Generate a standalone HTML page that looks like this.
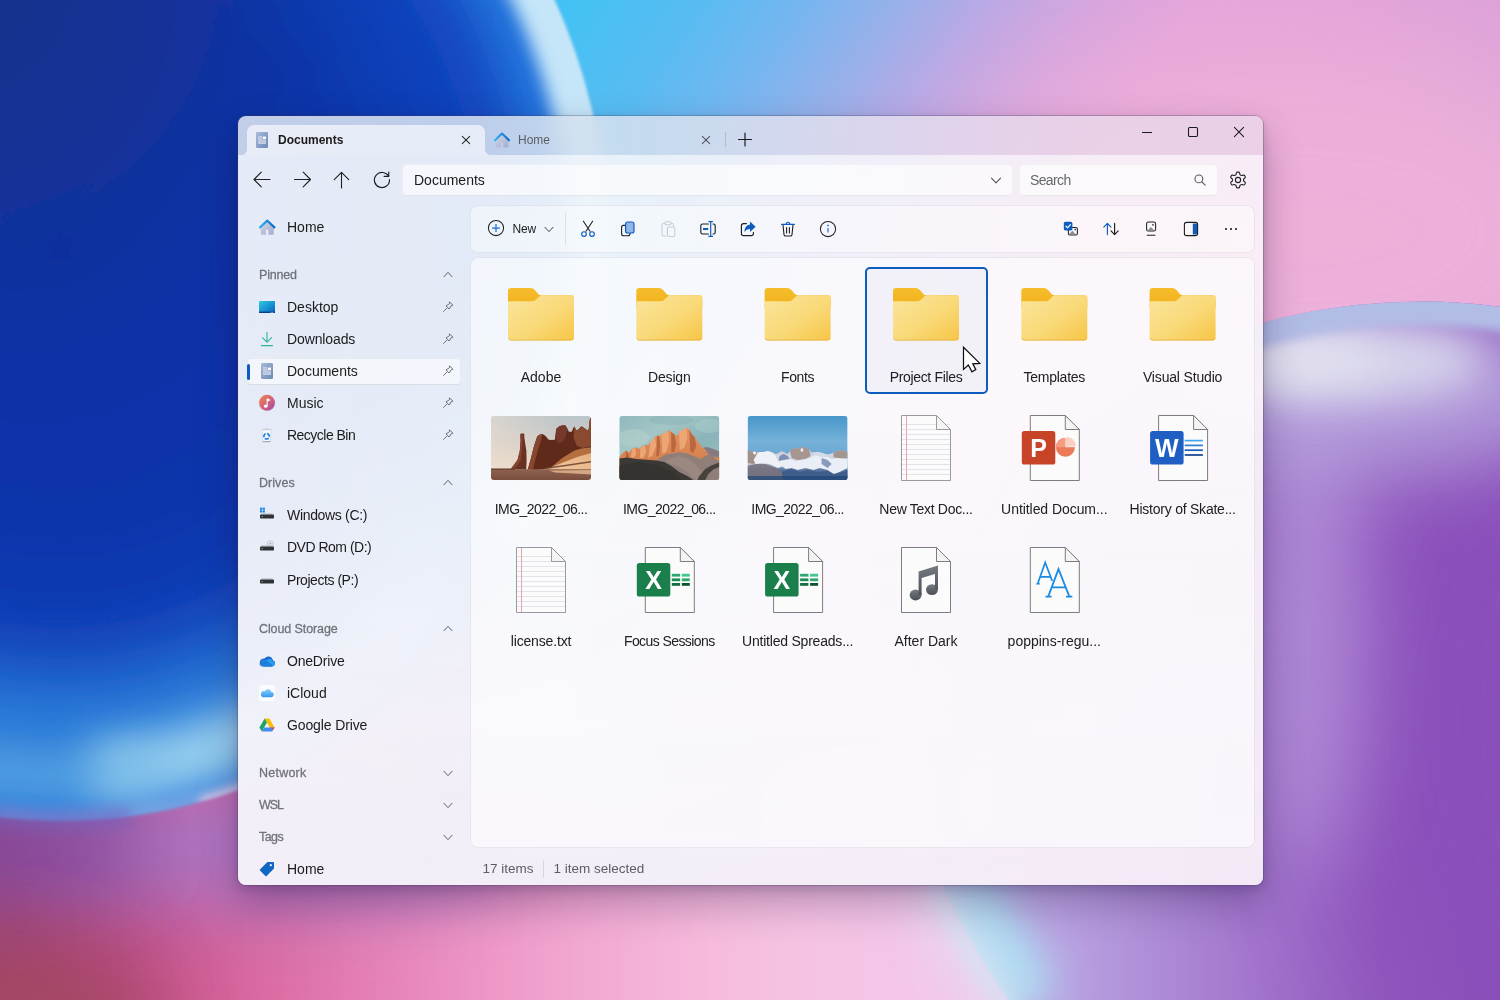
<!DOCTYPE html>
<html lang="en">
<head>
<meta charset="utf-8">
<title>Files</title>
<style>
*{box-sizing:border-box;margin:0;padding:0}
html,body{width:1500px;height:1000px;overflow:hidden;background:#c9a6dc;font-family:"Liberation Sans",sans-serif;color:#1b1b1b}
#wall{position:absolute;left:0;top:0;width:1500px;height:1000px;display:block}
#win{position:absolute;left:238px;top:116px;width:1025px;height:769px;border-radius:8px;overflow:hidden;background:linear-gradient(180deg,rgba(230,210,235,0) 40%,rgba(228,210,236,.6) 100%),linear-gradient(90deg,rgba(222,230,243,.87) 0%,rgba(212,224,238,.87) 38%,rgba(224,220,238,.87) 62%,rgba(232,214,233,.87) 82%,rgba(234,212,232,.87) 100%);-webkit-backdrop-filter:blur(10px);backdrop-filter:blur(10px);box-shadow:0 0 0 1px rgba(60,60,90,.28),0 18px 40px rgba(30,10,60,.30),0 4px 12px rgba(30,10,60,.18)}
#body{position:absolute;left:0;top:39px;width:1025px;height:730px;background:linear-gradient(155deg,rgba(250,252,255,.62) 0%,rgba(255,255,255,.62) 50%,rgba(255,250,254,.62) 100%)}

.abs{position:absolute}
.t{position:absolute;white-space:nowrap;line-height:20px;height:20px}
svg.i{position:absolute;overflow:visible}
#tab1{position:absolute;left:9px;top:9px;width:238px;height:30px;border-radius:7px 7px 0 0;background:rgba(255,255,255,.62)}
#tab1:before,#tab1:after{content:"";position:absolute;bottom:0;width:5px;height:5px}
#tab1:before{left:-5px;background:radial-gradient(circle at 0 0,rgba(255,255,255,0) 4.5px,rgba(255,255,255,.62) 5px)}
#tab1:after{right:-5px;background:radial-gradient(circle at 100% 0,rgba(255,255,255,0) 4.5px,rgba(255,255,255,.62) 5px)}
#addr{position:absolute;left:164px;top:48px;width:611px;height:32px;border-radius:5px;background:rgba(255,255,255,.62);border:1px solid rgba(0,0,0,.04);border-bottom-color:rgba(0,0,0,.075)}
#srch{position:absolute;left:781px;top:48px;width:199px;height:32px;border-radius:5px;background:rgba(255,255,255,.62);border:1px solid rgba(0,0,0,.04);border-bottom-color:rgba(0,0,0,.075)}
#tool{position:absolute;left:232px;top:89px;width:785px;height:48px;border-radius:8px;background:rgba(255,255,255,.42);border:1px solid rgba(20,30,80,.07)}
#pane{position:absolute;left:232px;top:141px;width:785px;height:591px;border-radius:8px;background:rgba(255,255,255,.55);border:1px solid rgba(20,30,80,.08)}
#selrow{position:absolute;left:9px;top:242px;width:214px;height:27px;border-radius:4px;background:rgba(255,255,255,.55);border:1px solid rgba(0,0,0,.05);border-bottom-color:rgba(0,0,0,.10)}
#selrow i{position:absolute;left:-1px;top:5px;width:3px;height:16px;border-radius:2px;background:#0f5cbe}
.sb{font-size:14px;color:#1b1b1b}
.hd{font-size:12.5px;color:#70737a;-webkit-text-stroke:.28px #70737a;letter-spacing:.05px}
.lb{position:absolute;width:128px;text-align:center;font-size:14px;line-height:20px;color:#202020;white-space:nowrap}
#sel{position:absolute;left:626.5px;top:150.5px;width:123px;height:127px;border:2.2px solid #0c5cbd;border-radius:5px;background:rgba(226,226,242,.36)}
</style>
</head>
<body>
<svg id="wall" viewBox="0 0 1500 1000">
<defs>
<filter id="b8" filterUnits="userSpaceOnUse" x="-300" y="-300" width="2100" height="1600"><feGaussianBlur stdDeviation="8"/></filter>
<filter id="b2" filterUnits="userSpaceOnUse" x="-300" y="-300" width="2100" height="1600"><feGaussianBlur stdDeviation="1.6"/></filter>
<filter id="b4" filterUnits="userSpaceOnUse" x="-300" y="-300" width="2100" height="1600"><feGaussianBlur stdDeviation="4"/></filter>
<filter id="b20" filterUnits="userSpaceOnUse" x="-300" y="-300" width="2100" height="1600"><feGaussianBlur stdDeviation="20"/></filter>
<filter id="b40" filterUnits="userSpaceOnUse" x="-300" y="-300" width="2100" height="1600"><feGaussianBlur stdDeviation="40"/></filter>
<filter id="b70" filterUnits="userSpaceOnUse" x="-300" y="-300" width="2100" height="1600"><feGaussianBlur stdDeviation="70"/></filter>
<linearGradient id="sky" x1="0" y1="0" x2="1075" y2="731" gradientUnits="userSpaceOnUse">
<stop offset="0" stop-color="#1a66d8"/>
<stop offset=".354" stop-color="#40c2f4"/>
<stop offset=".445" stop-color="#58bcf2"/>
<stop offset=".509" stop-color="#74b6f0"/>
<stop offset=".572" stop-color="#98b0ea"/>
<stop offset=".636" stop-color="#bca8e4"/>
<stop offset=".70" stop-color="#d4a4de"/>
<stop offset=".763" stop-color="#e2a2da"/>
<stop offset=".85" stop-color="#e0a0d8"/>
<stop offset="1" stop-color="#d8a0d8"/>
</linearGradient>
<linearGradient id="low" x1="0" y1="0" x2="1" y2="0">
<stop offset="0" stop-color="#8c4082"/>
<stop offset=".07" stop-color="#a0447c"/>
<stop offset=".13" stop-color="#bc4e86"/>
<stop offset=".20" stop-color="#d8669e"/>
<stop offset=".30" stop-color="#e888bc"/>
<stop offset=".40" stop-color="#f2a8d2"/>
<stop offset=".50" stop-color="#f7c0e0"/>
<stop offset=".62" stop-color="#f2c8ea"/>
<stop offset="1" stop-color="#f2c8ea"/>
</linearGradient>
<radialGradient id="bluep" cx="61" cy="247" r="574" gradientUnits="userSpaceOnUse" gradientTransform="translate(61 247) scale(.953 1) translate(-61 -247)">
<stop offset="0" stop-color="#0b2fa4"/>
<stop offset=".5" stop-color="#0c34ab"/>
<stop offset=".75" stop-color="#1042bc"/>
<stop offset=".9" stop-color="#1a5ccf"/>
<stop offset="1" stop-color="#2f80e2"/>
</radialGradient>
<linearGradient id="purp" x1="950" y1="0" x2="1500" y2="0" gradientUnits="userSpaceOnUse">
<stop offset="0" stop-color="#c4b8e8"/>
<stop offset=".22" stop-color="#b8a0e0"/>
<stop offset=".5" stop-color="#a67cd0"/>
<stop offset=".78" stop-color="#9259be"/>
<stop offset="1" stop-color="#8a50b8"/>
</linearGradient>
<radialGradient id="navy" cx="-40" cy="-30" r="470" gradientUnits="userSpaceOnUse">
<stop offset="0.000" stop-color="#1a2f8a" stop-opacity="0.900"/>
<stop offset="0.083" stop-color="#1a2f8a" stop-opacity="0.885"/>
<stop offset="0.167" stop-color="#1a2f8a" stop-opacity="0.840"/>
<stop offset="0.250" stop-color="#1a2f8a" stop-opacity="0.768"/>
<stop offset="0.333" stop-color="#1a2f8a" stop-opacity="0.675"/>
<stop offset="0.417" stop-color="#1a2f8a" stop-opacity="0.566"/>
<stop offset="0.500" stop-color="#1a2f8a" stop-opacity="0.450"/>
<stop offset="0.583" stop-color="#1a2f8a" stop-opacity="0.334"/>
<stop offset="0.667" stop-color="#1a2f8a" stop-opacity="0.225"/>
<stop offset="0.750" stop-color="#1a2f8a" stop-opacity="0.132"/>
<stop offset="0.833" stop-color="#1a2f8a" stop-opacity="0.060"/>
<stop offset="0.917" stop-color="#1a2f8a" stop-opacity="0.015"/>
<stop offset="1.000" stop-color="#1a2f8a" stop-opacity="0.000"/>
</radialGradient>
<clipPath id="cpBlue"><ellipse cx="61" cy="247" rx="547" ry="574"/></clipPath>
<clipPath id="cpPurp"><path id="ppath" d="M1015 1010 Q960 930 940 880 C900 740 960 540 1050 434 A546 498 0 0 1 1560 318 L1560 1010 Z"/></clipPath>
</defs>
<!-- upper sky -->
<rect width="1500" height="1000" fill="url(#sky)"/>
<!-- pink haze right-top -->
<ellipse cx="1300" cy="230" rx="330" ry="200" fill="#f0b2da" filter="url(#b70)" opacity=".9"/>
<!-- lower pink field -->
<g filter="url(#b40)">
<rect x="-100" y="700" width="1700" height="400" fill="url(#low)"/>
</g>
<ellipse cx="260" cy="845" rx="260" ry="58" fill="#a878c6" filter="url(#b40)" opacity=".95"/>
<ellipse cx="0" cy="850" rx="150" ry="52" fill="#82469a" filter="url(#b40)" opacity=".95"/>
<ellipse cx="-40" cy="1030" rx="200" ry="100" fill="#a4465e" filter="url(#b40)" opacity=".85"/>
<!-- right purple petal -->
<g clip-path="url(#cpPurp)">
<rect x="850" y="280" width="720" height="740" fill="url(#purp)"/>
<ellipse cx="1520" cy="720" rx="170" ry="330" fill="#8a4fbb" filter="url(#b70)" opacity=".9"/>
<ellipse cx="1305" cy="640" rx="60" ry="230" fill="#b594dc" filter="url(#b40)" opacity=".75"/>
<ellipse cx="1360" cy="390" rx="230" ry="85" fill="#b8a6df" filter="url(#b40)" opacity=".9"/>
<ellipse cx="1335" cy="362" rx="150" ry="40" fill="#d9d8ec" filter="url(#b20)" opacity=".95"/>
<ellipse cx="1300" cy="360" rx="80" ry="22" fill="#e4e4f0" filter="url(#b20)" opacity=".85"/>
<path d="M940 880 C900 740 960 540 1050 434 A546 498 0 0 1 1560 318" fill="none" stroke="#b2bde6" stroke-width="48" filter="url(#b4)"/>
<path d="M1025 1010 Q968 930 946 880" fill="none" stroke="#a9e2f3" stroke-width="84" filter="url(#b20)" opacity=".95"/>
</g>
<path d="M1000 1015 Q944 930 924 870" fill="none" stroke="#e6daf1" stroke-width="46" filter="url(#b20)" opacity=".75"/>
<path d="M1008 1010 Q952 930 933 875" fill="none" stroke="#cfe6f5" stroke-width="14" filter="url(#b8)" opacity=".8"/>
<!-- left blue petal -->
<g filter="url(#b2)"><g clip-path="url(#cpBlue)">
<ellipse cx="61" cy="247" rx="547" ry="574" fill="url(#bluep)"/>
<rect x="-20" y="-20" width="560" height="500" fill="url(#navy)"/>
<!-- broad lower glow following the arc -->
<ellipse cx="61" cy="247" rx="480" ry="507" fill="none" stroke="#3385dc" stroke-width="150" filter="url(#b40)" opacity=".9" pathLength="100" stroke-dasharray="34 66" stroke-dashoffset="-6"/>
<ellipse cx="61" cy="247" rx="500" ry="527" fill="none" stroke="#9dd3ef" stroke-width="58" filter="url(#b20)" opacity="1" pathLength="100" stroke-dasharray="14 86" stroke-dashoffset="-10"/>
<ellipse cx="61" cy="247" rx="502" ry="529" fill="none" stroke="#6db4e6" stroke-width="40" filter="url(#b20)" opacity=".7" pathLength="100" stroke-dasharray="12 88" stroke-dashoffset="-22"/>
<!-- right rim -->
<ellipse cx="61" cy="247" rx="547" ry="574" fill="none" stroke="#2f86e6" stroke-width="140" filter="url(#b20)" opacity=".62" pathLength="100" stroke-dasharray="34 66" stroke-dashoffset="22"/>
<ellipse cx="61" cy="247" rx="547" ry="574" fill="none" stroke="#cbe9f9" stroke-width="78" filter="url(#b8)" opacity=".97" pathLength="100" stroke-dasharray="30 70" stroke-dashoffset="21"/>
<!-- thin pink edge at bottom right -->
<ellipse cx="61" cy="247" rx="547" ry="574" fill="none" stroke="#f4d6ea" stroke-width="9" filter="url(#b4)" opacity=".85" pathLength="100" stroke-dasharray="9 91" stroke-dashoffset="-12"/>
<ellipse cx="61" cy="247" rx="547" ry="574" fill="none" stroke="#e8c4e4" stroke-width="8" filter="url(#b8)" opacity=".7" pathLength="100" stroke-dasharray="8 92" stroke-dashoffset="-19"/>
</g></g>
<ellipse cx="61" cy="247" rx="547" ry="574" fill="none" stroke="#6f62bd" stroke-width="16" filter="url(#b8)" opacity=".7" pathLength="100" stroke-dasharray="12 88" stroke-dashoffset="-23"/>
</svg>
<div id="win">
<div id="body"></div>
<div id="tab1"></div>
<svg class="i" style="left:18px;top:16px" width="13" height="17" viewBox="0 0 13 17"><defs><linearGradient id="g1" x1="0" y1="0" x2="1" y2="1"><stop offset="0" stop-color="#a9bbd9"/><stop offset="1" stop-color="#6a89b6"/></linearGradient></defs><rect x="0" y="0" width="12" height="16" rx="1.3" fill="url(#g1)"/><path d="M2 4H6.3V7.6H10V12H2Z" fill="#c3cee2"/><rect x="7" y="4.6" width="3" height="2.4" fill="#fff"/><path d="M2 5.5H6M2 7H6M2 8.6H10M2 10.2H10" stroke="#aebcd6" stroke-width=".45" fill="none"/></svg>
<div class="t tb" style="left:40px;top:13.5px;font-weight:bold;font-size:12px;color:#1b1b1b">Documents</div>
<svg class="i" style="left:223px;top:19px" width="10.4" height="10.4" viewBox="0 0 10.4 10.4"><g transform="translate(0.3 0.3)"><path d="M1 1L8.4 8.4M8.4 1L1 8.4" stroke="#2a2a2a" stroke-width="1.05" stroke-linecap="round" fill="none"/></g></svg>
<svg class="i" style="left:256px;top:16px" width="16" height="16" viewBox="0 0 16 16"><defs><linearGradient id="g2" x1="0" y1="0" x2="1" y2="0"><stop offset="0" stop-color="#2cb4f0"/><stop offset="1" stop-color="#0a68cc"/></linearGradient><linearGradient id="g3" x1="0" y1="0" x2="1" y2="1"><stop offset="0" stop-color="#d3d6e4"/><stop offset="1" stop-color="#a3acce"/></linearGradient></defs><path d="M1.6 8.4L8 2.6L14.4 8.4V14.2Q14.4 15.4 13.2 15.4H9.2V10.6H6.8V15.4H2.8Q1.6 15.4 1.6 14.2Z" fill="url(#g3)"/><path d="M1 8.2L8 1.6L15 8.2" stroke="url(#g2)" stroke-width="2.1" stroke-linecap="round" stroke-linejoin="round" fill="none"/></svg>
<div class="t tb" style="left:280px;top:13.5px;font-size:12px;color:#5c5e66">Home</div>
<svg class="i" style="left:463px;top:19px" width="10.4" height="10.4" viewBox="0 0 10.4 10.4"><g transform="translate(0.3 0.3)"><path d="M1 1L8.4 8.4M8.4 1L1 8.4" stroke="#55565c" stroke-width="1.05" stroke-linecap="round" fill="none"/></g></svg>
<div class="abs" style="left:487px;top:16px;width:1px;height:15px;background:rgba(0,0,0,.14)"></div>
<svg class="i" style="left:499px;top:16px" width="16.0" height="16.0" viewBox="0 0 16.0 16.0"><g transform="translate(0.5 0.0)"><path d="M7.5 1V14.0M1 7.5H14.0" stroke="#1b1b1b" stroke-width="1.2" stroke-linecap="round" fill="none"/></g></svg>
<svg class="i" style="left:903px;top:10px" width="12" height="12"><path d="M1 6.5H11" stroke="#1b1b1b" stroke-width="1.1" fill="none"/></svg>
<svg class="i" style="left:949px;top:10px" width="12" height="12"><rect x="1.5" y="1.5" width="9" height="9" rx="1.2" stroke="#1b1b1b" stroke-width="1.1" fill="none"/></svg>
<svg class="i" style="left:995px;top:10px" width="12.2" height="12.2" viewBox="0 0 12.2 12.2"><g transform="translate(0.4 0.4)"><path d="M1 1L10.2 10.2M10.2 1L1 10.2" stroke="#1b1b1b" stroke-width="1.05" stroke-linecap="round" fill="none"/></g></svg>
<svg class="i" style="left:14px;top:53px" width="21" height="21" viewBox="0 0 21 21"><g transform="translate(0 0.5)"><path d="M-8 0H8M-8 0L-0.7 -7.3M-8 0L-0.7 7.3" transform="translate(10 10)" stroke="#1f1f1f" stroke-width="1.1" stroke-linecap="round" stroke-linejoin="round" fill="none"/></g></svg>
<svg class="i" style="left:54px;top:53px" width="21" height="21" viewBox="0 0 21 21"><g transform="translate(0.5 0.5)"><path d="M-8 0H8M8 0L0.7 -7.3M8 0L0.7 7.3" transform="translate(10 10)" stroke="#1f1f1f" stroke-width="1.1" stroke-linecap="round" stroke-linejoin="round" fill="none"/></g></svg>
<svg class="i" style="left:93px;top:54px" width="21" height="21" viewBox="0 0 21 21"><g transform="translate(0.5 0.1)"><path d="M0 -7.8V7.9M0 -7.8L-7.3 -0.5M0 -7.8L7.3 -0.5" transform="translate(10 10)" stroke="#1f1f1f" stroke-width="1.1" stroke-linecap="round" stroke-linejoin="round" fill="none"/></g></svg>
<svg class="i" style="left:133px;top:54px" width="21" height="21" viewBox="0 0 21 21"><g transform="translate(0.95 0)"><path d="M6.7 -3.5A7.55 7.55 0 1 0 7.55 -0.4M6.8 -7.9V-3.6H2.2" transform="translate(10 10)" stroke="#1f1f1f" stroke-width="1.15" stroke-linecap="round" stroke-linejoin="round" fill="none"/></g></svg>
<div id="addr"></div>
<div class="t sb" style="left:176px;top:54px;font-size:14px">Documents</div>
<svg class="i" style="left:750px;top:56px" width="17" height="17" viewBox="0 0 17 17"><g transform="translate(0 0.5)"><path d="M-4.5 -2.475L0 2.475L4.5 -2.475" transform="translate(8 8)" stroke="#555" stroke-width="1.1" stroke-linecap="round" stroke-linejoin="round" fill="none"/></g></svg>
<div id="srch"></div>
<div class="t sb" style="left:792px;top:54px;letter-spacing:-0.63px;font-size:14px;color:#66686e">Search</div>
<svg class="i" style="left:954px;top:56px" width="17" height="17" viewBox="0 0 17 17"><circle cx="6.9" cy="6.9" r="3.9" stroke="#55575c" stroke-width="1.1" fill="none"/><path d="M9.8 9.8L13.2 13.2" stroke="#55575c" stroke-width="1.1" stroke-linecap="round"/></svg>
<svg class="i" style="left:990px;top:54px" width="21" height="21" viewBox="0 0 21 21"><path d="M10.00 2.10L10.52 2.12L11.03 2.17L11.48 2.56L11.75 3.48L11.90 4.40L12.14 4.83L12.48 4.98L12.80 5.15L13.11 5.34L13.41 5.56L13.90 5.55L14.77 5.23L15.70 5.00L16.27 5.19L16.57 5.61L16.84 6.05L17.09 6.51L17.30 6.98L17.18 7.56L16.52 8.25L15.80 8.85L15.55 9.27L15.59 9.63L15.60 10.00L15.59 10.37L15.55 10.73L15.80 11.15L16.52 11.75L17.18 12.44L17.30 13.02L17.09 13.49L16.84 13.95L16.57 14.39L16.27 14.81L15.70 15.00L14.77 14.77L13.90 14.45L13.41 14.44L13.11 14.66L12.80 14.85L12.48 15.02L12.14 15.17L11.90 15.60L11.75 16.52L11.48 17.44L11.03 17.83L10.52 17.88L10.00 17.90L9.48 17.88L8.97 17.83L8.52 17.44L8.25 16.52L8.10 15.60L7.86 15.17L7.52 15.02L7.20 14.85L6.89 14.66L6.59 14.44L6.10 14.45L5.23 14.77L4.30 15.00L3.73 14.81L3.43 14.39L3.16 13.95L2.91 13.49L2.70 13.02L2.82 12.44L3.48 11.75L4.20 11.15L4.45 10.73L4.41 10.37L4.40 10.00L4.41 9.63L4.45 9.27L4.20 8.85L3.48 8.25L2.82 7.56L2.70 6.98L2.91 6.51L3.16 6.05L3.43 5.61L3.73 5.19L4.30 5.00L5.23 5.23L6.10 5.55L6.59 5.56L6.89 5.34L7.20 5.15L7.52 4.98L7.86 4.83L8.10 4.40L8.25 3.48L8.52 2.56L8.97 2.17L9.48 2.12Z" stroke="#1f1f1f" stroke-width="1.1" stroke-linejoin="round" fill="none"/><circle cx="10" cy="10" r="2.6" stroke="#1f1f1f" stroke-width="1.1" fill="none"/></svg>
<div id="selrow"><i></i></div>
<svg class="i" style="left:20.7px;top:102.7px" width="16.4" height="16.4" viewBox="0 0 16 16"><defs><linearGradient id="g4" x1="0" y1="0" x2="1" y2="0"><stop offset="0" stop-color="#2cb4f0"/><stop offset="1" stop-color="#0a68cc"/></linearGradient><linearGradient id="g5" x1="0" y1="0" x2="1" y2="1"><stop offset="0" stop-color="#d3d6e4"/><stop offset="1" stop-color="#a3acce"/></linearGradient></defs><path d="M1.6 8.4L8 2.6L14.4 8.4V14.2Q14.4 15.4 13.2 15.4H9.2V10.6H6.8V15.4H2.8Q1.6 15.4 1.6 14.2Z" fill="url(#g5)"/><path d="M1 8.2L8 1.6L15 8.2" stroke="url(#g4)" stroke-width="2.1" stroke-linecap="round" stroke-linejoin="round" fill="none"/></svg>
<div class="t sb" style="left:49px;top:101px;">Home</div>
<div class="t hd" style="left:21px;top:149px;letter-spacing:-0.17px;">Pinned</div>
<svg class="i" style="left:202px;top:150px" width="17" height="17" viewBox="0 0 17 17"><g transform="translate(0 0.5)"><path d="M-4 2.2L0 -2.2L4 2.2" transform="translate(8 8)" stroke="#5f6168" stroke-width="1.0" stroke-linecap="round" stroke-linejoin="round" fill="none"/></g></svg>
<svg class="i" style="left:21px;top:184px" width="17" height="15" viewBox="0 0 17 15"><defs><linearGradient id="g6" x1="0" y1="0" x2="1" y2="1"><stop offset="0" stop-color="#33c8dc"/><stop offset=".5" stop-color="#1897d4"/><stop offset="1" stop-color="#0a5cba"/></linearGradient></defs><rect x="0" y="1" width="16" height="12" rx=".8" fill="url(#g6)"/><rect x="0" y="11.6" width="16" height="1.4" fill="#0a3f8a"/><rect x="11.5" y="11.9" width="1" height=".8" fill="#cfe6ff"/><rect x="13.2" y="11.9" width="1" height=".8" fill="#cfe6ff"/></svg>
<div class="t sb" style="left:49px;top:181px;">Desktop</div>
<svg class="i" style="left:202px;top:183px" width="17" height="17" viewBox="0 0 17 17"><path d="M1.8 -4.9L4.9 -1.8L3 -1.1L1.1 2L-2 -1.1L1.1 -3ZM-0.5 0.5L-4.4 4.4" transform="translate(8 8)" stroke="#6a6c74" stroke-width=".95" stroke-linecap="round" stroke-linejoin="round" fill="none"/></svg>
<svg class="i" style="left:21px;top:215px" width="17" height="17" viewBox="0 0 17 17"><path d="M8 1.2V11M3.4 6.6L8 11.2L12.6 6.6" stroke="#2db59c" stroke-width="1.1" stroke-linecap="round" stroke-linejoin="round" fill="none"/><path d="M2.4 14.6H13.6" stroke="#2db59c" stroke-width="1.1" stroke-linecap="round"/></svg>
<div class="t sb" style="left:49px;top:213px;letter-spacing:-0.12px;">Downloads</div>
<svg class="i" style="left:202px;top:215px" width="17" height="17" viewBox="0 0 17 17"><path d="M1.8 -4.9L4.9 -1.8L3 -1.1L1.1 2L-2 -1.1L1.1 -3ZM-0.5 0.5L-4.4 4.4" transform="translate(8 8)" stroke="#6a6c74" stroke-width=".95" stroke-linecap="round" stroke-linejoin="round" fill="none"/></svg>
<svg class="i" style="left:23px;top:247px" width="13" height="17" viewBox="0 0 13 17"><defs><linearGradient id="g7" x1="0" y1="0" x2="1" y2="1"><stop offset="0" stop-color="#a9bbd9"/><stop offset="1" stop-color="#6a89b6"/></linearGradient></defs><rect x="0" y="0" width="12" height="16" rx="1.3" fill="url(#g7)"/><path d="M2 4H6.3V7.6H10V12H2Z" fill="#c3cee2"/><rect x="7" y="4.6" width="3" height="2.4" fill="#fff"/><path d="M2 5.5H6M2 7H6M2 8.6H10M2 10.2H10" stroke="#aebcd6" stroke-width=".45" fill="none"/></svg>
<div class="t sb" style="left:49px;top:245px;">Documents</div>
<svg class="i" style="left:202px;top:247px" width="17" height="17" viewBox="0 0 17 17"><path d="M1.8 -4.9L4.9 -1.8L3 -1.1L1.1 2L-2 -1.1L1.1 -3ZM-0.5 0.5L-4.4 4.4" transform="translate(8 8)" stroke="#6a6c74" stroke-width=".95" stroke-linecap="round" stroke-linejoin="round" fill="none"/></svg>
<svg class="i" style="left:21px;top:278px" width="17" height="17" viewBox="0 0 17 17"><g transform="translate(0 0.8)"><defs><linearGradient id="g8" x1="0" y1="0" x2="1" y2="1"><stop offset="0" stop-color="#ee8a48"/><stop offset=".55" stop-color="#d0607c"/><stop offset="1" stop-color="#9a4cb4"/></linearGradient></defs><circle cx="8" cy="8" r="8" fill="url(#g8)"/><ellipse cx="6.7" cy="11.4" rx="1.8" ry="1.6" fill="#fff"/><path d="M8.1 11.4V3.8" stroke="#fff" stroke-width="1" fill="none"/><path d="M8.1 3.4L11.8 5.2L8.1 7Z" fill="#fff"/></g></svg>
<div class="t sb" style="left:49px;top:277px;">Music</div>
<svg class="i" style="left:202px;top:279px" width="17" height="17" viewBox="0 0 17 17"><path d="M1.8 -4.9L4.9 -1.8L3 -1.1L1.1 2L-2 -1.1L1.1 -3ZM-0.5 0.5L-4.4 4.4" transform="translate(8 8)" stroke="#6a6c74" stroke-width=".95" stroke-linecap="round" stroke-linejoin="round" fill="none"/></svg>
<svg class="i" style="left:23px;top:312px" width="11" height="16" viewBox="0 0 11 16"><g transform="translate(0.6 0)"><path d="M.4 1.6H9.6L8.8 13.6H1.2Z" fill="#f3f5f9" stroke="#cdd1da" stroke-width=".6"/><path d="M1.2 13.7H8.8" stroke="#9a9ca6" stroke-width="1"/><path d="M.6 1.4H9.4" stroke="#c2c6d0" stroke-width=".8"/><path d="M3.4 .5H6.6" stroke="#c8ccd4" stroke-width=".7"/><path d="M5.47 5.64A2.7 2.7 0 0 1 7.66 8.77M7.07 10.04A2.7 2.7 0 0 1 3.26 10.37M2.46 9.22A2.7 2.7 0 0 1 4.08 5.76" fill="none" stroke="#1a80e8" stroke-width="1.7"/></g></svg>
<div class="t sb" style="left:49px;top:309px;letter-spacing:-0.52px;">Recycle Bin</div>
<svg class="i" style="left:202px;top:311px" width="17" height="17" viewBox="0 0 17 17"><path d="M1.8 -4.9L4.9 -1.8L3 -1.1L1.1 2L-2 -1.1L1.1 -3ZM-0.5 0.5L-4.4 4.4" transform="translate(8 8)" stroke="#6a6c74" stroke-width=".95" stroke-linecap="round" stroke-linejoin="round" fill="none"/></svg>
<div class="t hd" style="left:21px;top:357px;">Drives</div>
<svg class="i" style="left:202px;top:358px" width="17" height="17" viewBox="0 0 17 17"><g transform="translate(0 0.5)"><path d="M-4 2.2L0 -2.2L4 2.2" transform="translate(8 8)" stroke="#5f6168" stroke-width="1.0" stroke-linecap="round" stroke-linejoin="round" fill="none"/></g></svg>
<svg class="i" style="left:21px;top:390px" width="17" height="17" viewBox="0 0 17 17"><path d="M2 8.6L3 7H13L14 8.6Z" fill="#c9ccd4"/><rect x="1" y="8.6" width="14" height="4" rx=".8" fill="#2f3136"/><rect x="2.6" y="10.2" width="1.3" height="1" fill="#4fd26a"/><rect x="1" y="1.6" width="2.2" height="2.2" fill="#1a84e6"/><rect x="3.7" y="1.6" width="2.2" height="2.2" fill="#1a84e6"/><rect x="1" y="4.3" width="2.2" height="2.2" fill="#1a84e6"/><rect x="3.7" y="4.3" width="2.2" height="2.2" fill="#1a84e6"/></svg>
<div class="t sb" style="left:49px;top:389px;letter-spacing:-0.32px;">Windows (C:)</div>
<svg class="i" style="left:21px;top:422px" width="17" height="17" viewBox="0 0 17 17"><ellipse cx="11.4" cy="5.6" rx="3.2" ry="2.8" fill="#dfe2e8" stroke="#b6bac4" stroke-width=".6"/><circle cx="11.4" cy="5.6" r=".8" fill="#9da2ae"/><path d="M2 8.6L3 7H13L14 8.6Z" fill="#c9ccd4"/><rect x="1" y="8.6" width="14" height="4" rx=".8" fill="#2f3136"/><rect x="2.6" y="10.2" width="1.3" height="1" fill="#4fd26a"/></svg>
<div class="t sb" style="left:49px;top:421px;letter-spacing:-0.5px;">DVD Rom (D:)</div>
<svg class="i" style="left:21px;top:455px" width="17" height="17" viewBox="0 0 17 17"><path d="M2 8.6L3 7H13L14 8.6Z" fill="#c9ccd4"/><rect x="1" y="8.6" width="14" height="4" rx=".8" fill="#2f3136"/><rect x="2.6" y="10.2" width="1.3" height="1" fill="#4fd26a"/></svg>
<div class="t sb" style="left:49px;top:454px;letter-spacing:-0.45px;">Projects (P:)</div>
<div class="t hd" style="left:21px;top:503px;letter-spacing:-0.1px;">Cloud Storage</div>
<svg class="i" style="left:202px;top:504px" width="17" height="17" viewBox="0 0 17 17"><g transform="translate(0 0.5)"><path d="M-4 2.2L0 -2.2L4 2.2" transform="translate(8 8)" stroke="#5f6168" stroke-width="1.0" stroke-linecap="round" stroke-linejoin="round" fill="none"/></g></svg>
<svg class="i" style="left:21px;top:537px" width="17" height="17" viewBox="0 0 17 17"><path d="M5.2 13.4H13A3.2 3.2 0 0 0 14 7.2A4.6 4.6 0 0 0 5.6 5.6A3.9 3.9 0 0 0 1.4 11.4Z" fill="#1668c8"/><path d="M3.2 13.4H13.2A2.8 2.8 0 0 0 13.8 7.9A3.8 3.8 0 0 0 7.2 7.6A3.5 3.5 0 0 0 3.2 13.4Z" fill="#2a9cf0"/><path d="M.4 11A2.6 2.6 0 0 1 3.8 8.4A3.8 3.8 0 0 1 7.4 7.4L13.8 12.6Q13.4 13.4 12.6 13.4H3A2.5 2.5 0 0 1 .4 11Z" fill="#1460be" opacity=".5"/></svg>
<div class="t sb" style="left:49px;top:535px;letter-spacing:-0.2px;">OneDrive</div>
<svg class="i" style="left:21px;top:569px" width="17" height="17" viewBox="0 0 17 17"><defs><linearGradient id="g9" x1="0" y1="0" x2="0" y2="1"><stop offset="0" stop-color="#86d0fa"/><stop offset="1" stop-color="#3798f0"/></linearGradient></defs><rect x="0" y="0" width="16" height="16" rx="3.4" fill="#fbfcff"/><path d="M4.2 12.2H12A2.6 2.6 0 0 0 12.4 7A3.5 3.5 0 0 0 5.8 6.2A3.1 3.1 0 0 0 4.2 12.2Z" fill="url(#g9)"/></svg>
<div class="t sb" style="left:49px;top:567px;">iCloud</div>
<svg class="i" style="left:21px;top:601px" width="17" height="17" viewBox="0 0 17 17"><path d="M5.6 1.4H10.4L15.6 10.4H10.8Z" fill="#fbbc04"/><path d="M5.6 1.4L8 5.6L2.8 14.6L.4 10.4Z" fill="#1fa463"/><path d="M5.2 10.4H15.6L13.2 14.6H2.8Z" fill="#4688f4"/><path d="M10.8 10.4H15.6L14.4 12.5Z" fill="#e94235" opacity=".95"/></svg>
<div class="t sb" style="left:49px;top:599px;letter-spacing:-0.12px;">Google Drive</div>
<div class="t hd" style="left:21px;top:647px;letter-spacing:0.23px;">Network</div>
<svg class="i" style="left:202px;top:649px" width="17" height="17" viewBox="0 0 17 17"><g transform="translate(0 0.5)"><path d="M-4 -2.2L0 2.2L4 -2.2" transform="translate(8 8)" stroke="#5f6168" stroke-width="1.0" stroke-linecap="round" stroke-linejoin="round" fill="none"/></g></svg>
<div class="t hd" style="left:21px;top:679px;letter-spacing:-1.1px;">WSL</div>
<svg class="i" style="left:202px;top:681px" width="17" height="17" viewBox="0 0 17 17"><g transform="translate(0 0.5)"><path d="M-4 -2.2L0 2.2L4 -2.2" transform="translate(8 8)" stroke="#5f6168" stroke-width="1.0" stroke-linecap="round" stroke-linejoin="round" fill="none"/></g></svg>
<div class="t hd" style="left:21px;top:711px;letter-spacing:-0.55px;">Tags</div>
<svg class="i" style="left:202px;top:713px" width="17" height="17" viewBox="0 0 17 17"><g transform="translate(0 0.5)"><path d="M-4 -2.2L0 2.2L4 -2.2" transform="translate(8 8)" stroke="#5f6168" stroke-width="1.0" stroke-linecap="round" stroke-linejoin="round" fill="none"/></g></svg>
<svg class="i" style="left:21px;top:745px" width="17" height="17" viewBox="0 0 17 17"><path d="M8.4 1H14.2Q15 1 15 1.8V7.6L7.6 15Q7 15.6 6.4 15L1 9.6Q.4 9 1 8.4Z" fill="#1266c4"/><circle cx="11.8" cy="4.2" r="1.15" fill="#eaf2ff"/></svg>
<div class="t sb" style="left:49px;top:743px;">Home</div>
<div id="tool"></div>
<svg class="i" style="left:248px;top:102px" width="21" height="21" viewBox="0 0 21 21"><circle cx="10" cy="10" r="7.6" stroke="#1f1f1f" stroke-width="1.05" fill="none"/><path d="M10 6V14M6 10H14" stroke="#1a6fd0" stroke-width="1.25" stroke-linecap="butt"/></svg>
<div class="t tb" style="left:274.5px;top:102.5px;font-size:12px;color:#1b1b1b;letter-spacing:-.2px">New</div>
<svg class="i" style="left:303px;top:105px" width="17" height="17" viewBox="0 0 17 17"><g transform="translate(0 0.5)"><path d="M-4 -2.2L0 2.2L4 -2.2" transform="translate(8 8)" stroke="#444" stroke-width="1.0" stroke-linecap="round" stroke-linejoin="round" fill="none"/></g></svg>
<div class="abs" style="left:327px;top:97px;width:1px;height:32px;background:rgba(0,0,0,.09)"></div>
<svg class="i" style="left:340px;top:103px" width="21" height="21" viewBox="0 0 21 21"><path d="M5.4 2.2L12 12.2M14.6 2.2L8 12.2" stroke="#1f1f1f" stroke-width="1.1" stroke-linecap="round" fill="none"/><circle cx="6" cy="15" r="2.3" stroke="#0f5cbe" stroke-width="1.15" fill="none"/><circle cx="14" cy="15" r="2.3" stroke="#0f5cbe" stroke-width="1.15" fill="none"/></svg>
<svg class="i" style="left:380px;top:103px" width="21" height="21" viewBox="0 0 21 21"><path d="M6.8 6.4H5.6Q3.6 6.4 3.6 8.4V14.8Q3.6 16.8 5.6 16.8H10Q12 16.8 12 14.8V14.4" stroke="#1f1f1f" stroke-width="1.1" stroke-linecap="round" fill="none"/><rect x="7.6" y="3" width="8.4" height="11" rx="2" fill="#8fb6e6" stroke="#0f5cbe" stroke-width="1.15"/></svg>
<svg class="i" style="left:420px;top:103px" width="21" height="21" viewBox="0 0 21 21"><path d="M7 4.4H5.4Q4 4.4 4 5.8V15.6Q4 17 5.4 17H8.6" stroke="#c9ccd2" stroke-width="1.05" fill="none"/><path d="M13 4.4H14.2Q15.6 4.4 15.6 5.8V7" stroke="#c9ccd2" stroke-width="1.05" fill="none"/><rect x="7" y="2.8" width="6" height="3" rx="1.2" stroke="#c9ccd2" stroke-width="1.05" fill="none"/><rect x="9.4" y="8" width="7.4" height="9.4" rx="1.4" stroke="#c9ccd2" stroke-width="1.05" fill="none"/></svg>
<svg class="i" style="left:460px;top:103px" width="21" height="21" viewBox="0 0 21 21"><path d="M10.4 5H4.6Q2.8 5 2.8 6.8V13.2Q2.8 15 4.6 15H10.4M15 5H15.4Q17.2 5 17.2 6.8V13.2Q17.2 15 15.4 15H15" stroke="#1f1f1f" stroke-width="1.15" stroke-linecap="round" fill="none"/><path d="M5 10H10.2" stroke="#0f5cbe" stroke-width="2"/><path d="M12.7 2.6V17.4M10.9 2.6H14.5M10.9 17.4H14.5" stroke="#0f5cbe" stroke-width="1.15" stroke-linecap="round" fill="none"/></svg>
<svg class="i" style="left:500px;top:103px" width="21" height="21" viewBox="0 0 21 21"><path d="M8.4 4.6H5.6Q3.4 4.6 3.4 6.8V14.4Q3.4 16.6 5.6 16.6H13.2Q15.4 16.6 15.4 14.4V13.4" stroke="#1f1f1f" stroke-width="1.15" stroke-linecap="round" fill="none"/><path d="M12 2.6L17.6 7.8L12 13V10Q8.4 9.8 6.4 13Q6.6 6.4 12 5.6Z" fill="#0f5cbe"/></svg>
<svg class="i" style="left:540px;top:103px" width="21" height="21" viewBox="0 0 21 21"><path d="M5 6L6 15.6Q6.2 17 7.6 17H12.4Q13.8 17 14 15.6L15 6" stroke="#1f1f1f" stroke-width="1.1" stroke-linecap="round" fill="none"/><path d="M8.6 8.6V14M11.4 8.6V14" stroke="#1f1f1f" stroke-width="1.1" stroke-linecap="round"/><path d="M3.6 5.4H16.4M8.2 5.2Q8.2 3.2 10 3.2Q11.8 3.2 11.8 5.2" stroke="#0f5cbe" stroke-width="1.15" stroke-linecap="round" fill="none"/></svg>
<svg class="i" style="left:580px;top:103px" width="21" height="21" viewBox="0 0 21 21"><circle cx="10" cy="10" r="7.6" stroke="#1f1f1f" stroke-width="1.05" fill="none"/><path d="M10 9V13.6" stroke="#3a86de" stroke-width="1.4" stroke-linecap="butt"/><circle cx="10" cy="6.5" r=".95" fill="#3a86de"/></svg>
<svg class="i" style="left:823px;top:103px" width="21" height="21" viewBox="0 0 21 21"><rect x="7.4" y="8.4" width="9" height="7.6" rx="1.6" stroke="#1f1f1f" stroke-width="1.05" fill="#f3f4f8"/><path d="M8.4 15L11.4 11.8L14.8 15.4Z" fill="#8a8d94"/><circle cx="14.2" cy="10.6" r=".8" fill="#2a2a2a"/><rect x="2.8" y="2.8" width="8.6" height="8.6" rx="1.6" fill="#0f5cbe"/><path d="M4.9 7.2L6.5 8.8L9.4 5.6" stroke="#fff" stroke-width="1.2" stroke-linecap="round" stroke-linejoin="round" fill="none"/></svg>
<svg class="i" style="left:863px;top:103px" width="21" height="21" viewBox="0 0 21 21"><path d="M6.4 15.6V4.6M2.8 8.2L6.4 4.4L10 8.2" stroke="#0f5cbe" stroke-width="1.15" stroke-linecap="round" stroke-linejoin="round" fill="none"/><path d="M13.6 4.4V15.4M10 11.8L13.6 15.6L17.2 11.8" stroke="#1f1f1f" stroke-width="1.15" stroke-linecap="round" stroke-linejoin="round" fill="none"/></svg>
<svg class="i" style="left:903px;top:103px" width="21" height="21" viewBox="0 0 21 21"><rect x="5.6" y="3" width="9" height="9" rx="1.8" stroke="#1f1f1f" stroke-width="1.05" fill="none"/><path d="M6.6 11.4L9.8 8L13.6 11.6Z" fill="#8a8d94"/><circle cx="12" cy="5.8" r=".85" fill="#2a2a2a"/><path d="M6.2 16.2H14" stroke="#1f1f1f" stroke-width="1.05" stroke-linecap="round"/></svg>
<svg class="i" style="left:943px;top:103px" width="21" height="21" viewBox="0 0 21 21"><path d="M11.8 4.4H14.6Q16 4.4 16 5.8V14.2Q16 15.6 14.6 15.6H11.8Z" fill="#0f5cbe"/><rect x="3.4" y="3.4" width="13.2" height="13.2" rx="2.2" stroke="#1f1f1f" stroke-width="1.1" fill="none"/></svg>
<svg class="i" style="left:985px;top:105px" width="16" height="16"><circle cx="3" cy="8" r="1.05" fill="#1b1b1b"/><circle cx="8" cy="8" r="1.05" fill="#1b1b1b"/><circle cx="13" cy="8" r="1.05" fill="#1b1b1b"/></svg>
<div id="pane"></div>
<div id="sel"></div>
<svg class="i" style="left:270px;top:172px" width="67" height="54" viewBox="0 0 67 54"><defs><linearGradient id="g10" x1="0" y1="0" x2="1" y2="1"><stop offset="0" stop-color="#fbe59c"/><stop offset=".55" stop-color="#f9d978"/><stop offset="1" stop-color="#f7c546"/></linearGradient><linearGradient id="g11" x1="0" y1="0" x2="0" y2="1"><stop offset="0" stop-color="#f6bd2b"/><stop offset="1" stop-color="#f0b01c"/></linearGradient></defs><path d="M0 3Q0 0 3 0H22.5Q25 0 26.6 1.8L30.5 6.2Q31.6 7.2 33 7.2H63Q66 7.2 66 10.2V20H0Z" fill="url(#g11)"/><path d="M0 13.2H24.4Q26.2 13.2 27.6 11.9L31.6 8.3Q33 7.2 34.6 7.2H63.4Q66 7.2 66 9.8V49.6Q66 52.2 63.4 52.2H2.6Q0 52.2 0 49.6Z" fill="url(#g10)"/><path d="M.6 50.4Q1.2 52.2 3 52.2H63Q64.8 52.2 65.4 50.4" stroke="#e3ab2e" stroke-width=".9" fill="none" opacity=".8"/></svg>
<div class="lb" style="left:239.0px;top:251px;">Adobe</div>
<svg class="i" style="left:398px;top:172px" width="67" height="54" viewBox="0 0 67 54"><g transform="translate(0.3 0)"><defs><linearGradient id="g12" x1="0" y1="0" x2="1" y2="1"><stop offset="0" stop-color="#fbe59c"/><stop offset=".55" stop-color="#f9d978"/><stop offset="1" stop-color="#f7c546"/></linearGradient><linearGradient id="g13" x1="0" y1="0" x2="0" y2="1"><stop offset="0" stop-color="#f6bd2b"/><stop offset="1" stop-color="#f0b01c"/></linearGradient></defs><path d="M0 3Q0 0 3 0H22.5Q25 0 26.6 1.8L30.5 6.2Q31.6 7.2 33 7.2H63Q66 7.2 66 10.2V20H0Z" fill="url(#g13)"/><path d="M0 13.2H24.4Q26.2 13.2 27.6 11.9L31.6 8.3Q33 7.2 34.6 7.2H63.4Q66 7.2 66 9.8V49.6Q66 52.2 63.4 52.2H2.6Q0 52.2 0 49.6Z" fill="url(#g12)"/><path d="M.6 50.4Q1.2 52.2 3 52.2H63Q64.8 52.2 65.4 50.4" stroke="#e3ab2e" stroke-width=".9" fill="none" opacity=".8"/></g></svg>
<div class="lb" style="left:367.3px;top:251px;letter-spacing:-0.15px;">Design</div>
<svg class="i" style="left:526px;top:172px" width="67" height="54" viewBox="0 0 67 54"><g transform="translate(0.6 0)"><defs><linearGradient id="g14" x1="0" y1="0" x2="1" y2="1"><stop offset="0" stop-color="#fbe59c"/><stop offset=".55" stop-color="#f9d978"/><stop offset="1" stop-color="#f7c546"/></linearGradient><linearGradient id="g15" x1="0" y1="0" x2="0" y2="1"><stop offset="0" stop-color="#f6bd2b"/><stop offset="1" stop-color="#f0b01c"/></linearGradient></defs><path d="M0 3Q0 0 3 0H22.5Q25 0 26.6 1.8L30.5 6.2Q31.6 7.2 33 7.2H63Q66 7.2 66 10.2V20H0Z" fill="url(#g15)"/><path d="M0 13.2H24.4Q26.2 13.2 27.6 11.9L31.6 8.3Q33 7.2 34.6 7.2H63.4Q66 7.2 66 9.8V49.6Q66 52.2 63.4 52.2H2.6Q0 52.2 0 49.6Z" fill="url(#g14)"/><path d="M.6 50.4Q1.2 52.2 3 52.2H63Q64.8 52.2 65.4 50.4" stroke="#e3ab2e" stroke-width=".9" fill="none" opacity=".8"/></g></svg>
<div class="lb" style="left:495.6px;top:251px;letter-spacing:-0.4px;">Fonts</div>
<svg class="i" style="left:655px;top:172px" width="67" height="54" viewBox="0 0 67 54"><defs><linearGradient id="g16" x1="0" y1="0" x2="1" y2="1"><stop offset="0" stop-color="#fbe59c"/><stop offset=".55" stop-color="#f9d978"/><stop offset="1" stop-color="#f7c546"/></linearGradient><linearGradient id="g17" x1="0" y1="0" x2="0" y2="1"><stop offset="0" stop-color="#f6bd2b"/><stop offset="1" stop-color="#f0b01c"/></linearGradient></defs><path d="M0 3Q0 0 3 0H22.5Q25 0 26.6 1.8L30.5 6.2Q31.6 7.2 33 7.2H63Q66 7.2 66 10.2V20H0Z" fill="url(#g17)"/><path d="M0 13.2H24.4Q26.2 13.2 27.6 11.9L31.6 8.3Q33 7.2 34.6 7.2H63.4Q66 7.2 66 9.8V49.6Q66 52.2 63.4 52.2H2.6Q0 52.2 0 49.6Z" fill="url(#g16)"/><path d="M.6 50.4Q1.2 52.2 3 52.2H63Q64.8 52.2 65.4 50.4" stroke="#e3ab2e" stroke-width=".9" fill="none" opacity=".8"/></svg>
<div class="lb" style="left:624.0px;top:251px;letter-spacing:-0.33px;">Project Files</div>
<svg class="i" style="left:783px;top:172px" width="67" height="54" viewBox="0 0 67 54"><g transform="translate(0.3 0)"><defs><linearGradient id="g18" x1="0" y1="0" x2="1" y2="1"><stop offset="0" stop-color="#fbe59c"/><stop offset=".55" stop-color="#f9d978"/><stop offset="1" stop-color="#f7c546"/></linearGradient><linearGradient id="g19" x1="0" y1="0" x2="0" y2="1"><stop offset="0" stop-color="#f6bd2b"/><stop offset="1" stop-color="#f0b01c"/></linearGradient></defs><path d="M0 3Q0 0 3 0H22.5Q25 0 26.6 1.8L30.5 6.2Q31.6 7.2 33 7.2H63Q66 7.2 66 10.2V20H0Z" fill="url(#g19)"/><path d="M0 13.2H24.4Q26.2 13.2 27.6 11.9L31.6 8.3Q33 7.2 34.6 7.2H63.4Q66 7.2 66 9.8V49.6Q66 52.2 63.4 52.2H2.6Q0 52.2 0 49.6Z" fill="url(#g18)"/><path d="M.6 50.4Q1.2 52.2 3 52.2H63Q64.8 52.2 65.4 50.4" stroke="#e3ab2e" stroke-width=".9" fill="none" opacity=".8"/></g></svg>
<div class="lb" style="left:752.3px;top:251px;letter-spacing:-0.26px;">Templates</div>
<svg class="i" style="left:911px;top:172px" width="67" height="54" viewBox="0 0 67 54"><g transform="translate(0.6 0)"><defs><linearGradient id="g20" x1="0" y1="0" x2="1" y2="1"><stop offset="0" stop-color="#fbe59c"/><stop offset=".55" stop-color="#f9d978"/><stop offset="1" stop-color="#f7c546"/></linearGradient><linearGradient id="g21" x1="0" y1="0" x2="0" y2="1"><stop offset="0" stop-color="#f6bd2b"/><stop offset="1" stop-color="#f0b01c"/></linearGradient></defs><path d="M0 3Q0 0 3 0H22.5Q25 0 26.6 1.8L30.5 6.2Q31.6 7.2 33 7.2H63Q66 7.2 66 10.2V20H0Z" fill="url(#g21)"/><path d="M0 13.2H24.4Q26.2 13.2 27.6 11.9L31.6 8.3Q33 7.2 34.6 7.2H63.4Q66 7.2 66 9.8V49.6Q66 52.2 63.4 52.2H2.6Q0 52.2 0 49.6Z" fill="url(#g20)"/><path d="M.6 50.4Q1.2 52.2 3 52.2H63Q64.8 52.2 65.4 50.4" stroke="#e3ab2e" stroke-width=".9" fill="none" opacity=".8"/></g></svg>
<div class="lb" style="left:880.6px;top:251px;letter-spacing:-0.17px;">Visual Studio</div>
<svg class="i" style="left:253px;top:300px" width="101" height="65" viewBox="0 0 101 65"><defs><linearGradient id="g22" x1="0" y1="0" x2="0" y2="1"><stop offset="0" stop-color="#bcc5c9"/><stop offset=".45" stop-color="#d2cbc6"/><stop offset=".82" stop-color="#e9d9c8"/></linearGradient><linearGradient id="g22h" x1="0" y1="0" x2="1" y2="0"><stop offset="0" stop-color="#efe2d2" stop-opacity=".55"/><stop offset=".7" stop-color="#efe2d2" stop-opacity="0"/></linearGradient><linearGradient id="g24" x1="0" y1="0" x2="0" y2="1"><stop offset="0" stop-color="#8e6250"/><stop offset="1" stop-color="#7a4c3c"/></linearGradient><linearGradient id="g25" x1="1" y1="0" x2="0" y2="1"><stop offset="0" stop-color="#e6b080"/><stop offset="1" stop-color="#f3d0aa"/></linearGradient><clipPath id="c23"><rect width="100" height="64" rx="3"/></clipPath></defs><g clip-path="url(#c23)"><rect width="100" height="64" fill="url(#g22)"/><rect width="100" height="54" fill="url(#g22h)"/><polygon points="36.8,53.5 40,42 43,30 46.3,20.2 49,18.5 51.5,18 54,19.5 55.9,21.6 57.3,23.5 60,24 63.9,23.8 64.5,18 65.4,12.8 68.3,10.3 71,9.5 74.2,9.2 76.4,12.8 77.9,15.8 80.8,15.8 82,12.5 83.4,10.3 85.2,14.3 87.4,13.6 90.3,10.3 93.3,12.1 96.2,14.3 97.7,13.6 98.4,6 99.1,2.6 100,2 100,42 83,47 61,52 50.7,54.5" fill="#5f2a1a"/><polygon points="36.8,53.5 40,42 43,30 46.3,20.2 49,18.5 51.5,18 50,24 47,34 44,45 42,53.5" fill="#874630"/><polygon points="65.4,12.8 68.3,10.3 71,9.5 74.2,9.2 76.4,12.8 75,20 72,26 67,27 64.5,22" fill="#74392a"/><polygon points="83.4,10.3 85.2,14.3 87.4,13.6 90.3,10.3 93.3,12.1 96.2,14.3 97.7,13.6 98.4,6 99.1,2.6 100,2 100,30 92,32 86,30 82.5,22" fill="#8a4a30"/><polygon points="61,50.5 72,41.4 83,34.8 90.3,32.6 100,31.2 100,37.5 86,41.5 72,47 60,52.5" fill="#b46e40"/><polygon points="48,54 60,51.4 72,46.4 86,41 100,37 100,58 52,58" fill="url(#g25)"/><path d="M54 52.6L100 45.8" stroke="#6c4230" stroke-width="1.5" opacity=".85"/><polygon points="19.5,53.5 22,50 26.5,44 28.8,35 29.6,24 29.2,18.6 30.4,17.4 33.4,17.8 33.2,20.5 34,26 35.4,35 35.6,45 35.2,53.5" fill="#6a3222"/><polygon points="29.6,24 29.2,18.6 30.4,17.4 31.6,17.6 31.4,30 30,44 26,50 22,53.5 19.5,53.5 22,50 26.5,44 28.8,35" fill="#83452f"/><rect x="0" y="53.2" width="100" height="11" fill="url(#g24)"/><path d="M0 53.2H24" stroke="#5f3828" stroke-width="1.2"/><path d="M58 54.4L100 54V58.4L64 56.6Z" fill="#e2b48c" opacity=".85"/></g></svg>
<div class="lb" style="left:239.0px;top:383px;letter-spacing:-0.56px;">IMG_2022_06...</div>
<svg class="i" style="left:381px;top:300px" width="101" height="65" viewBox="0 0 101 65"><g transform="translate(0.3 0)"><defs><linearGradient id="g26" x1="0" y1="0" x2="1" y2="1"><stop offset="0" stop-color="#8fb8bc"/><stop offset=".3" stop-color="#a4c6c6"/><stop offset=".6" stop-color="#8ab4ba"/><stop offset="1" stop-color="#9cc0c2"/></linearGradient><linearGradient id="g28" x1="0" y1="0" x2="0" y2="1"><stop offset="0" stop-color="#e2925f"/><stop offset="1" stop-color="#cf7646"/></linearGradient><clipPath id="c27"><rect width="100" height="64" rx="3"/></clipPath></defs><g clip-path="url(#c27)"><rect width="100" height="64" fill="url(#g26)"/><ellipse cx="14" cy="22" rx="16" ry="9" fill="#b6d2ce" opacity=".5"/><ellipse cx="90" cy="10" rx="14" ry="7" fill="#b0cecc" opacity=".45"/><ellipse cx="52" cy="4" rx="22" ry="5" fill="#84aeb6" opacity=".4"/><polygon points="84,31.4 88,31 94,33 100,35.6 100,41 93,39.5 88.5,37.9 86.3,34.2" fill="#857a7e"/><polygon points="0,40.8 2.6,37.9 6.6,34.2 9.2,37.1 12.8,32.7 15.8,31.2 19.5,32.7 25.3,29 29,29 31.2,26.1 35.6,21 37.8,19.5 40,20.2 42.2,18 45.9,17.3 48.8,14 51.8,15.8 55.4,18.7 58.4,19.5 59.8,15.4 63.5,14.3 64.6,12.5 67.2,11.8 70.1,13.6 72.3,18 75.3,21 78.9,26.1 82.6,31.2 86.3,34.2 88.5,37.9 92,40 100,42 100,64 0,64" fill="url(#g28)"/><path d="M31.2 26.1L35.6 21L37 30L33 40L29 42ZM42.2 18L45.9 17.3L48.8 14L50 24L47 36L43 38ZM59.8 15.4L63.5 14.3L64.6 12.5L67.2 11.8L68 22L65 32L60.5 34ZM12.8 32.7L15.8 31.2L17 38L14 42L11.5 41ZM21 32L25.3 29L27 36L24 42L20.5 42Z" fill="#eeaa7a" opacity=".85"/><path d="M37.8 19.5L40 20.2L41 30L39.5 40L37 40.5ZM51.8 15.8L55.4 18.7L57 28L55 36L52 36ZM70.1 13.6L72.3 18L75.3 21L77 30L74 37L71 35ZM6.6 34.2L9.2 37.1L9.5 42L6.5 42Z" fill="#b25e3a" opacity=".8"/><polygon points="37,44.5 45.9,38.6 52,37.4 60.6,36.2 68,37.6 75.3,40.4 81,43 88.5,38.8 92,38 100,41 100,64 60,64 52,54 44,47" fill="#8f7f78"/><path d="M46 45.5L58 40L68 42L76 48L84 58L86 64H76L68 56L58 50Z" fill="#9d8b83" opacity=".8"/><path d="M94 40.4L100 41.5V45L96 43.4Z" fill="#cf8352"/><polygon points="0,42.5 8,41.5 16.5,43 27.5,43.7 37,44.5 45,46 52,50 60,56 68,60 74,64 0,64" fill="#3a3935"/><path d="M0 50L20 46L40 50L56 58L62 64H0Z" fill="#34332f"/><polygon points="78,64 80,60 86,53 92,49.4 100,46.5 100,51 94,53.6 89,58 86,64" fill="#48423c"/></g></g></svg>
<div class="lb" style="left:367.3px;top:383px;letter-spacing:-0.56px;">IMG_2022_06...</div>
<svg class="i" style="left:509px;top:300px" width="101" height="65" viewBox="0 0 101 65"><g transform="translate(0.6 0)"><defs><linearGradient id="g29" x1="0" y1="0" x2="0" y2="1"><stop offset="0" stop-color="#4896ca"/><stop offset=".4" stop-color="#76b2d8"/><stop offset=".6" stop-color="#6aa8d4"/></linearGradient><linearGradient id="g31" x1="0" y1="0" x2="0" y2="1"><stop offset="0" stop-color="#b4b0b8"/><stop offset=".25" stop-color="#d2d7e4"/><stop offset=".5" stop-color="#c4ccdc"/><stop offset=".68" stop-color="#5f7aa2"/><stop offset="1" stop-color="#25497a"/></linearGradient><clipPath id="c30"><rect width="100" height="64" rx="3"/></clipPath></defs><g clip-path="url(#c30)"><rect width="100" height="64" fill="url(#g29)"/><polygon points="0,33.5 2,34.2 3.5,36.8 7.2,35.3 10.1,36.8 12.3,36 16,36 20.4,34.9 24.8,36.4 28.5,37.9 30.7,37.1 33.6,34.9 36.6,36 39.5,37.9 42.5,34.9 45.4,32.4 49.8,32.7 52.8,31.6 55,30.9 58.6,32 61.6,33.5 64.5,36.4 70.4,36 74.8,37.1 78.5,38.2 82.1,37.9 85.8,36.4 89.5,34.9 92.4,34.2 96.8,34.9 100,36 100,64 0,64" fill="url(#g31)"/><path d="M42.5 34.9L45.4 32.4L49.8 32.7L52.8 31.6L55 30.9L58.6 32L61.6 33.5L63 40L58 43L50 44L44 42Z" fill="#a6968f"/><path d="M0 33.5L2 34.2L3.5 36.8L7.2 35.3L10.1 36.8L11 44L6 48L0 47Z" fill="#a09088"/><path d="M85.8 36.4L89.5 34.9L92.4 34.2L96.8 34.9L100 36V42L92 43L86 41Z" fill="#a39590"/><path d="M10.1 36.8L12.3 36L16 36L20.4 34.9L24.8 36.4L28 40L31 46L36 50L30 52L22 48L14 47L8 48L6 44Z" fill="#eef1f7"/><path d="M5 36.5L7.2 35.3L9 37L7 39Z" fill="#f2f4f8"/><path d="M30 44L36 41L42 43L48 45L54 44L62 42L68 39L74 41L80 41L84 43L90 42L100 43V52L92 56L86 58L80 54L72 52L66 54L58 52L50 54L44 52L38 53L33 49Z" fill="#eaeef6"/><path d="M52.8 33L55 32L56 35L53.5 36Z" fill="#e8ecf4"/><path d="M64.5 36.4L70.4 36L74.8 37.1L78.5 38.2L76 41L68 39.5Z" fill="#d6dbe8"/><path d="M32 40L36 38L40 40L42 43L36 44L31 45Z" fill="#7d8fb0"/><path d="M74 42L80 44L84 48L80 52L74 48Z" fill="#6f86ac" opacity=".8"/><path d="M0 50L8 48L18 48L28 52L34 56L38 62L36 64H0Z" fill="#7b7480" opacity=".9"/><path d="M34 56L44 53L52 56L60 54L70 56L80 55L88 59L100 54V64H36Z" fill="#3f5d8a"/><path d="M0 60L100 60V64H0Z" fill="#1f4776" opacity=".7"/></g></g></svg>
<div class="lb" style="left:495.6px;top:383px;letter-spacing:-0.56px;">IMG_2022_06...</div>
<svg class="i" style="left:663px;top:299px" width="51" height="67" viewBox="0 0 51 67"><path d="M.5 .5H35.5L49.5 14.5V65.5H.5Z" fill="#fbfbfb" stroke="#9a9a9a" stroke-width="1"/><path d="M1 9.5H49M1 14.5H49M1 19.5H49M1 24.5H49M1 29.5H49M1 34.5H49M1 39.5H49M1 44.5H49M1 49.5H49M1 54.5H49M1 59.5H49" stroke="#e2e2ea" stroke-width="1" fill="none"/><path d="M5.5 1V65" stroke="#ee9fb0" stroke-width="1"/><path d="M35.5 .5V14.5H49.5" fill="#f4f4f4" stroke="#9a9a9a" stroke-width="1" stroke-linejoin="round"/><path d="M35.5 .5L49.5 14.5" stroke="#9a9a9a" stroke-width="1"/></svg>
<div class="lb" style="left:624.0px;top:383px;letter-spacing:-0.3px;">New Text Doc...</div>
<svg class="i" style="left:791px;top:299px" width="51" height="67" viewBox="0 0 51 67"><g transform="translate(0.8 0)"><path d="M.5 .5H35.5L49.5 14.5V65.5H.5Z" fill="#fbfbfb" stroke="#7c7c7c" stroke-width="1"/><circle cx="35.6" cy="32.2" r="9.5" fill="#ee7a5a"/><path d="M35.6 32.2H26.1A9.5 9.5 0 0 1 35.6 22.7Z" fill="#f59c80"/><path d="M36.6 31.2V21.7A9.5 9.5 0 0 1 46.1 31.2Z" fill="#fbcfc2"/><path d="M36.1 22V31.7H46" stroke="#fbfbfb" stroke-width="1" fill="none"/><path d="M35.5 .5V14.5H49.5" fill="#f4f4f4" stroke="#7c7c7c" stroke-width="1" stroke-linejoin="round"/><path d="M35.5 .5L49.5 14.5" stroke="#7c7c7c" stroke-width="1"/><rect x="-8" y="16" width="33.5" height="33.5" rx="2.6" fill="#c74428"/><text x="8.75" y="41.5" text-anchor="middle" font-family="Liberation Sans,sans-serif" font-weight="bold" font-size="25" fill="#fff">P</text></g></svg>
<div class="lb" style="left:752.3px;top:383px;letter-spacing:-0.06px;">Untitled Docum...</div>
<svg class="i" style="left:920px;top:299px" width="51" height="67" viewBox="0 0 51 67"><g transform="translate(0.1 0)"><path d="M.5 .5H35.5L49.5 14.5V65.5H.5Z" fill="#fbfbfb" stroke="#7c7c7c" stroke-width="1"/><path d="M26.6 25.6H44.8" stroke="#41a5ee" stroke-width="1.7"/><path d="M26.6 30.4H44.8" stroke="#2b7cd3" stroke-width="1.7"/><path d="M26.6 35.2H44.8" stroke="#185abd" stroke-width="1.7"/><path d="M26.6 40H44.8" stroke="#103f91" stroke-width="1.7"/><path d="M35.5 .5V14.5H49.5" fill="#f4f4f4" stroke="#7c7c7c" stroke-width="1" stroke-linejoin="round"/><path d="M35.5 .5L49.5 14.5" stroke="#7c7c7c" stroke-width="1"/><rect x="-8" y="16" width="33.5" height="33.5" rx="2.6" fill="#1f5fc4"/><text x="8.75" y="41.5" text-anchor="middle" font-family="Liberation Sans,sans-serif" font-weight="bold" font-size="25" fill="#fff">W</text></g></svg>
<div class="lb" style="left:880.6px;top:383px;letter-spacing:-0.23px;">History of Skate...</div>
<svg class="i" style="left:278px;top:431px" width="51" height="67" viewBox="0 0 51 67"><path d="M.5 .5H35.5L49.5 14.5V65.5H.5Z" fill="#fbfbfb" stroke="#9a9a9a" stroke-width="1"/><path d="M1 9.5H49M1 14.5H49M1 19.5H49M1 24.5H49M1 29.5H49M1 34.5H49M1 39.5H49M1 44.5H49M1 49.5H49M1 54.5H49M1 59.5H49" stroke="#e2e2ea" stroke-width="1" fill="none"/><path d="M5.5 1V65" stroke="#ee9fb0" stroke-width="1"/><path d="M35.5 .5V14.5H49.5" fill="#f4f4f4" stroke="#9a9a9a" stroke-width="1" stroke-linejoin="round"/><path d="M35.5 .5L49.5 14.5" stroke="#9a9a9a" stroke-width="1"/></svg>
<div class="lb" style="left:239.0px;top:515px;letter-spacing:-0.16px;">license.txt</div>
<svg class="i" style="left:406px;top:431px" width="51" height="67" viewBox="0 0 51 67"><g transform="translate(0.8 0)"><path d="M.5 .5H35.5L49.5 14.5V65.5H.5Z" fill="#fbfbfb" stroke="#7c7c7c" stroke-width="1"/><rect x="27" y="26.8" width="8.3" height="2.8" fill="#2aa870"/><rect x="37" y="26.8" width="8" height="2.8" fill="#3cc88c"/><rect x="27" y="31.4" width="8.3" height="2.8" fill="#1a8c56"/><rect x="37" y="31.4" width="8" height="2.8" fill="#2aa870"/><rect x="27" y="36.0" width="8.3" height="2.8" fill="#146c42"/><rect x="37" y="36.0" width="8" height="2.8" fill="#0e5432"/><path d="M35.5 .5V14.5H49.5" fill="#f4f4f4" stroke="#7c7c7c" stroke-width="1" stroke-linejoin="round"/><path d="M35.5 .5L49.5 14.5" stroke="#7c7c7c" stroke-width="1"/><rect x="-8" y="16" width="33.5" height="33.5" rx="2.6" fill="#1a7f4b"/><text x="8.75" y="41.5" text-anchor="middle" font-family="Liberation Sans,sans-serif" font-weight="bold" font-size="25" fill="#fff">X</text></g></svg>
<div class="lb" style="left:367.3px;top:515px;letter-spacing:-0.58px;">Focus Sessions</div>
<svg class="i" style="left:535px;top:431px" width="51" height="67" viewBox="0 0 51 67"><g transform="translate(0.1 0)"><path d="M.5 .5H35.5L49.5 14.5V65.5H.5Z" fill="#fbfbfb" stroke="#7c7c7c" stroke-width="1"/><rect x="27" y="26.8" width="8.3" height="2.8" fill="#2aa870"/><rect x="37" y="26.8" width="8" height="2.8" fill="#3cc88c"/><rect x="27" y="31.4" width="8.3" height="2.8" fill="#1a8c56"/><rect x="37" y="31.4" width="8" height="2.8" fill="#2aa870"/><rect x="27" y="36.0" width="8.3" height="2.8" fill="#146c42"/><rect x="37" y="36.0" width="8" height="2.8" fill="#0e5432"/><path d="M35.5 .5V14.5H49.5" fill="#f4f4f4" stroke="#7c7c7c" stroke-width="1" stroke-linejoin="round"/><path d="M35.5 .5L49.5 14.5" stroke="#7c7c7c" stroke-width="1"/><rect x="-8" y="16" width="33.5" height="33.5" rx="2.6" fill="#1a7f4b"/><text x="8.75" y="41.5" text-anchor="middle" font-family="Liberation Sans,sans-serif" font-weight="bold" font-size="25" fill="#fff">X</text></g></svg>
<div class="lb" style="left:495.6px;top:515px;letter-spacing:-0.21px;">Untitled Spreads...</div>
<svg class="i" style="left:663px;top:431px" width="51" height="67" viewBox="0 0 51 67"><path d="M.5 .5H35.5L49.5 14.5V65.5H.5Z" fill="#fbfbfb" stroke="#7c7c7c" stroke-width="1"/><defs><linearGradient id="g32" x1="0" y1="0" x2="0" y2="1"><stop offset="0" stop-color="#767b82"/><stop offset="1" stop-color="#4a4e55"/></linearGradient></defs><g fill="url(#g32)"><ellipse cx="14.6" cy="48" rx="6" ry="5.4"/><ellipse cx="31" cy="42.6" rx="6" ry="5.4"/><path d="M17.6 48V24.6L37 18.6V42.6H34V27L20.6 31V48Z"/></g><path d="M35.5 .5V14.5H49.5" fill="#f4f4f4" stroke="#7c7c7c" stroke-width="1" stroke-linejoin="round"/><path d="M35.5 .5L49.5 14.5" stroke="#7c7c7c" stroke-width="1"/></svg>
<div class="lb" style="left:624.0px;top:515px;">After Dark</div>
<svg class="i" style="left:791px;top:431px" width="51" height="67" viewBox="0 0 51 67"><g transform="translate(0.8 0)"><path d="M.5 .5H35.5L49.5 14.5V65.5H.5Z" fill="#fbfbfb" stroke="#7c7c7c" stroke-width="1"/><path d="M7.9 36.8L15.4 15.4L22.4 34M10.2 29.8H20.6" stroke="#1b8ae2" stroke-width="1.7" fill="none" stroke-linejoin="miter"/><path d="M6.6 36.8H10" stroke="#1b8ae2" stroke-width="1.5"/><path d="M18.5 49.4L28.7 22.1L39.5 49.4M22.2 40.3H35.6" stroke="#1b8ae2" stroke-width="1.8" fill="none"/><path d="M15.7 49.6H21.8M36.2 49.6H42.5" stroke="#1b8ae2" stroke-width="1.6"/><path d="M35.5 .5V14.5H49.5" fill="#f4f4f4" stroke="#7c7c7c" stroke-width="1" stroke-linejoin="round"/><path d="M35.5 .5L49.5 14.5" stroke="#7c7c7c" stroke-width="1"/></g></svg>
<div class="lb" style="left:752.3px;top:515px;">poppins-regu...</div>
<svg class="i" style="left:724px;top:230px" width="21" height="29" viewBox="0 0 21 29"><g transform="translate(0.5 0.2)"><path d="M1 1V23.2L5.8 18.8L9.5 25.6L13.3 23.4L10.3 17.6L17.3 17.2Z" fill="#fff" stroke="#111" stroke-width="1.25" stroke-linejoin="miter"/></g></svg>
<div class="t st" style="left:244.5px;top:743px;font-size:13.5px;color:#5d5d63">17 items</div>
<div class="abs" style="left:305px;top:744px;width:1px;height:18px;background:rgba(0,0,0,.10)"></div>
<div class="t st" style="left:315.5px;top:743px;font-size:13.5px;color:#5d5d63">1 item selected</div>
</div>
</body>
</html>
